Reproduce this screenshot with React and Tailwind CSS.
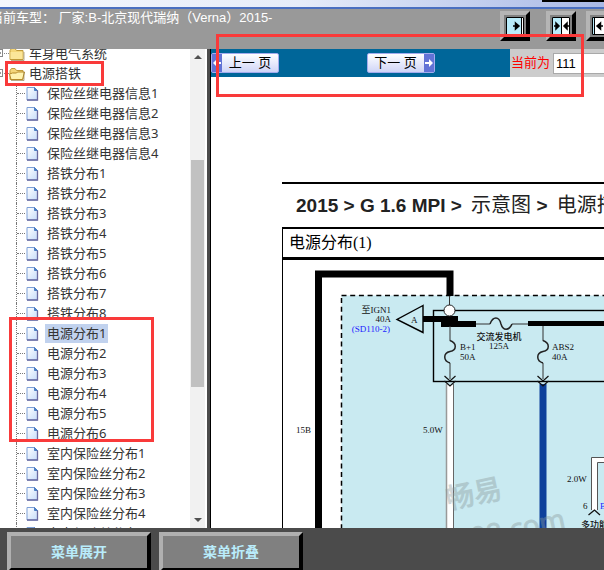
import React, { useState } from 'react';

const folders = [
  { id: 'body', name: '车身电气系统', open: false },
  { id: 'ground', name: '电源搭铁', open: true },
];

const pages = [
  '保险丝继电器信息1',
  '保险丝继电器信息2',
  '保险丝继电器信息3',
  '保险丝继电器信息4',
  '搭铁分布1',
  '搭铁分布2',
  '搭铁分布3',
  '搭铁分布4',
  '搭铁分布5',
  '搭铁分布6',
  '搭铁分布7',
  '搭铁分布8',
  '电源分布1',
  '电源分布2',
  '电源分布3',
  '电源分布4',
  '电源分布5',
  '电源分布6',
  '室内保险丝分布1',
  '室内保险丝分布2',
  '室内保险丝分布3',
  '室内保险丝分布4',
  '室内保险丝分布5',
];

const FolderIcon = ({ open }) => (
  <svg width="16" height="16" viewBox="0 -1 16 16" className="shrink-0">
    <path d="M1 4.5 2.5 2.5H6l1.5 2H14V13.5H1z" fill="#f5d77a" stroke="#c09a3a" />
    {open ? (
      <path d="M2 13.5 0.5 8 3.500 7h4l1-1h7l-2 7.5z" fill="#fff3b0" stroke="#b58a2a" />
    ) : (
      <path d="M1.500 6h12v7h-12z" fill="#fbe69a" />
    )}
    <path d="M2 14.500h13V6" fill="none" stroke="#8a7440" strokeOpacity="0.6" />
  </svg>
);

const PageIcon = () => (
  <svg width="13" height="16" viewBox="0 -1 13 16" className="shrink-0">
    <defs>
      <linearGradient id="sheet" x1="0" y1="0" x2="1" y2="1">
        <stop offset="0" stopColor="#ffffff" />
        <stop offset="1" stopColor="#c5dcfa" />
      </linearGradient>
    </defs>
    <path d="M1 1.500h7.500L11.500 4.500V14H1z" fill="url(#sheet)" stroke="#7d9fd6" />
    <path d="M8.500 1.500v3h3z" fill="#4c7fc4" stroke="#4c7fc4" />
    <path d="M1 14H11.500V4.500" fill="none" stroke="#6a6aa0" strokeWidth="1.300" />
  </svg>
);

const Expander = ({ open }) => (
  <svg width="9" height="20" viewBox="0 0 9 20" className="shrink-0">
    <rect x="-4.5" y="6.5" width="7" height="7" fill="#fff" stroke="#888" />
    <path d={open ? 'M-3 10h4' : 'M-3 10h4M-1 8v4'} stroke="#333" />
    <path d="M4 10.5h5" stroke="#888" strokeDasharray="1 1" />
  </svg>
);

const Tree = ({ selected, onSelect }) => (
  <nav className="min-w-0 flex-1 overflow-hidden text-[13px] leading-5 text-[#333]">
    <ul className="-mt-1.5">
      {folders.map((folder) => (
        <li key={folder.id} className="flex h-5 items-center">
          <Expander open={folder.open} />
          <FolderIcon open={folder.open} />
          <button type="button" className="ml-1 whitespace-nowrap">{folder.name}</button>
        </li>
      ))}
      {pages.map((page) => (
        <li key={page} className="flex h-5 items-center pl-4">
          <span className="h-5 border-l border-dotted border-[#777]" />
          <span className="mr-px w-2 border-t border-dotted border-[#777]" />
          <PageIcon />
          <button
            type="button"
            onClick={() => onSelect(page)}
            className={
              page === selected
                ? 'ml-1.5 bg-[#c1d2ee] px-0.5 leading-[19px] whitespace-nowrap'
                : 'ml-1.5 px-0.5 leading-[19px] whitespace-nowrap'
            }
          >
            {page}
          </button>
        </li>
      ))}
    </ul>
  </nav>
);

const ScrollTrack = () => (
  <div className="flex w-[15px] shrink-0 flex-col items-center bg-[#f1f1f1] py-1.5">
    <span className="border-x-4 border-b-4 border-x-transparent border-b-[#505050]" />
    <span className="h-[101px]" />
    <span className="h-[227px] w-[13px] bg-[#c1c1c1]" />
    <span className="mt-auto border-x-4 border-t-4 border-x-transparent border-t-[#505050]" />
  </div>
);

const layoutIcons = [
  { label: '展开左栏', fill: 'M0 0h15v18H0z', line: 'M15.5 0v18', arrows: 'M7 9h3M9.5 6l3.500 3-3.500 3z' },
  { label: '左右对分', fill: 'M0 0h9v18H0z', line: 'M9.5 0v18', arrows: 'M2 9h2M4 6l3 3-3 3zM17 9h-2M15 6l-3 3 3 3z' },
  { label: '展开右栏', fill: 'M0 0h2v18H0z', line: 'M2.5 0v18', arrows: 'M11 9H8.500M8.500 6L5 9l3.500 3z' },
];

const Header = () => (
  <header>
    <div className="flex h-[7px] justify-end bg-linear-to-r from-[#f4f7fd] via-[#e6ecf9] to-[#a9b9e6]">
      <span className="h-0.5 w-[62px] bg-black" />
    </div>
    <div className="h-0.5 bg-[#4a6fc0]" />
    <div className="flex h-10 justify-between overflow-hidden bg-[#999] text-[13px] text-white">
      <p className="-ml-2.5 shrink-0 pt-px leading-4 whitespace-pre">当前车型： 厂家:B-北京现代瑞纳（Verna）2015-</p>
      <div className="-mr-3 flex shrink-0 gap-2.5 pt-0.5">
        {layoutIcons.map((icon) => (
          <button
            key={icon.label}
            type="button"
            aria-label={icon.label}
            className="size-[30px] border-4 border-t-[#b5b5b5] border-r-black border-b-black border-l-[#b5b5b5] bg-[#808080] first:mr-1.5"
          >
            <svg width="18" height="18" viewBox="0 0 18 18" className="mx-auto">
              <path d="M0 0h18v18H0z" fill="#fff" />
              <path d={icon.fill} fill="#b9ecfb" />
              <path d={icon.line} stroke="#000" />
              <path d={icon.arrows} fill="#000" stroke="#000" strokeWidth="1.5" />
              <path d="M.5.5h17v17H.5z" fill="none" stroke="#000" />
            </svg>
          </button>
        ))}
      </div>
    </div>
  </header>
);

const PagerArrow = ({ back }) => (
  <span className="flex w-2.5 items-center justify-center self-stretch bg-[#6273d6]">
    <svg width="8" height="8" viewBox="0 0 8 8">
      <path d={back ? 'M8 3H4V0L0 4l4 4V5h4z' : 'M0 3h4V0l4 4-4 4V5H0z'} fill="#fff" />
    </svg>
  </span>
);

const Pager = () => {
  const [page, setPage] = useState('111');

  return (
    <div className="flex h-7 overflow-hidden bg-[#ccc] text-[13px]">
      <div className="grid min-w-0 flex-1 grid-cols-2 items-center bg-[#069] text-black">
        <button type="button" className="flex h-5 w-[68px] items-center rounded-xs border border-[#a3acee] bg-linear-to-b from-white to-[#d0d5f7]">
          <PagerArrow back />
          <span className="flex-1 leading-4">上一 页</span>
        </button>
        <button type="button" className="ml-1.5 flex h-5 w-[68px] items-center rounded-xs border border-[#a3acee] bg-linear-to-b from-white to-[#d0d5f7]">
          <span className="flex-1 leading-4">下一 页</span>
          <PagerArrow />
        </button>
      </div>
      <div className="flex w-[94px] shrink-0 items-center">
        <label htmlFor="page" className="w-[43px] shrink-0 pl-px text-[#f00]">当前为</label>
        <input
          id="page"
          value={page}
          onChange={(e) => setPage(e.target.value)}
          className="h-[21px] w-20 shrink-0 border border-[#a9a9a9] bg-white px-0.5 text-black"
        />
      </div>
    </div>
  );
};

// Power distribution sheet 1, origin at the lower edge of the title row
const Circuit = () => (
  <svg width="640" height="400" viewBox="283 259 640 400" className="block max-w-none font-['Liberation_Serif','Noto_Sans_CJK_SC',serif] text-[9px]">
    <rect x="341.5" y="294.5" width="600" height="500" fill="#c9eaf1" stroke="#000" strokeWidth="1.5" strokeDasharray="5 3.7" />
    <path d="M318.5 700V273H450V295" fill="none" stroke="#000" strokeWidth="7" />
    <rect x="433.5" y="309.5" width="500" height="71" fill="none" stroke="#000" strokeWidth="1.4" />

    <path d="M423 304.5 397 318.5 423 331.5z" fill="none" stroke="#000" strokeWidth="1.4" />
    <path d="M423 318H458" stroke="#000" strokeWidth="6" />
    <path d="M441 323H476" stroke="#000" strokeWidth="6" />
    <path d="M528 322.5H700" stroke="#000" strokeWidth="5" />
    <path d="M449.5 295V309M476 323H490M512 323H528M450 325V340M450 362V378M543 325V340M543 362V378" fill="none" stroke="#333" />
    <path d="M490 323C493 315 499 315 501 323C503 330 509 330 512 323" fill="none" stroke="#222" strokeWidth="1.5" />
    <path d="M450 339.5C457 342 457 349 450 350.5C443 352 443 360 450 362" fill="none" stroke="#222" strokeWidth="1.5" />
    <path d="M543 339.5C550 342 550 349 543 350.5C536 352 536 360 543 362" fill="none" stroke="#222" strokeWidth="1.5" />
    <circle cx="449.5" cy="309.5" r="5.5" fill="#fff" stroke="#222" />

    <path d="M447 384H453V700H447z" fill="#fff" />
    <path d="M446.5 383V700" stroke="#999" strokeWidth="1.5" />
    <path d="M453.5 383V700" stroke="#666" />
    <path d="M543 383V700" stroke="#0d409b" strokeWidth="7" />
    <path d="M444.5 375 450 380 455.5 375M444.5 380 450 385 455.5 380" fill="none" stroke="#111" strokeWidth="1.2" />
    <path d="M537.5 375 543 380 548.5 375M537.5 380 543 385 548.5 380" fill="none" stroke="#111" strokeWidth="1.2" />

    <path d="M591.5 509V456.5H700V461.5H597V509z" fill="#fff" />
    <path d="M591.5 509V456.5H700M597.5 509V461.5H700" fill="none" stroke="#555" />
    <path d="M588.5 514 594.5 509 600 514" fill="none" stroke="#111" strokeWidth="1.3" />

    <g fill="#111">
      <text x="391" y="312" textAnchor="end">至IGN1</text>
      <text x="391" y="321" textAnchor="end">40A</text>
      <text x="390" y="331" textAnchor="end" fill="#22f">(SD110-2)</text>
      <text x="411" y="322">A</text>
      <text x="460" y="349">B+1</text>
      <text x="460" y="359">50A</text>
      <text x="552" y="349">ABS2</text>
      <text x="552" y="359">40A</text>
      <text x="499" y="339" textAnchor="middle" className="font-medium">交流发电机</text>
      <text x="499" y="348" textAnchor="middle">125A</text>
      <text x="296" y="432">15B</text>
      <text x="423" y="432">5.0W</text>
      <text x="567" y="481">2.0W</text>
      <text x="583" y="508">6</text>
      <text x="600" y="508" fill="#22f">E31</text>
      <text x="581" y="527" className="font-medium">多功能</text>
    </g>

    <g
      fill="#8a9a9c"
      stroke="#8a9a9c"
      opacity="0.4"
      transform="rotate(-12 450 510)"
      className="font-['Open_Sans','Noto_Sans_CJK_SC',sans-serif] text-[28px]"
    >
      <text x="449" y="508">畅易</text>
      <text x="465" y="551">08.com</text>
    </g>
  </svg>
);

const Sheet = () => (
  <main className="min-h-0 flex-1 overflow-hidden bg-white pt-[105px] pl-[71px]">
    <h1 className="border-t-2 border-black pt-2 pb-2 pl-3.5 font-['Liberation_Sans','Noto_Sans_CJK_SC',sans-serif] text-[19px] leading-[26px] font-bold whitespace-nowrap text-[#222]">
      2015 &gt; G 1.6 MPI &gt; <span className="ml-1 text-xl leading-[26px] font-normal">示意图</span> &gt;{' '}
      <span className="ml-1 text-xl leading-[26px] font-normal">电源搭铁</span>
    </h1>
    <section className="border-t-2 border-l border-black">
      <h2 className="border-b-3 border-black pl-1.5 font-['Liberation_Serif','Noto_Sans_CJK_SC',serif] text-base leading-7">
        电源分布(1)
      </h2>
      <Circuit />
    </section>
  </main>
);

const MenuButton = ({ children }) => (
  <button
    type="button"
    className="h-10 w-36 border-4 border-t-[#b0b0b0] border-r-black border-b-black border-l-[#b0b0b0] bg-[#808080] text-sm font-bold text-[#b9ecfb]"
  >
    {children}
  </button>
);

const App = () => {
  const [selected, setSelected] = useState('电源分布1');

  return (
    <div className="relative flex h-screen flex-col overflow-hidden bg-white font-['Liberation_Sans','Noto_Sans_CJK_SC',sans-serif]">
      <Header />
      <div className="flex min-h-0 flex-1">
        <aside className="flex w-[211px] shrink-0 overflow-hidden border-r border-black font-['Noto_Sans','Noto_Sans_CJK_SC',sans-serif]">
          <Tree selected={selected} onSelect={setSelected} />
          <ScrollTrack />
          <span className="ml-0.5 w-[3px] shrink-0 bg-[#4b4b4b]" />
        </aside>
        <div className="flex min-w-0 flex-1 flex-col">
          <Pager />
          <Sheet />
        </div>
      </div>
      <footer className="flex h-[42px] shrink-0 gap-2 overflow-hidden bg-[#4b4b4b] pt-1 pl-[7px]">
        <MenuButton>菜单展开</MenuButton>
        <MenuButton>菜单折叠</MenuButton>
      </footer>

      {/* red marker frames over the page */}
      <div className="pointer-events-none absolute top-[34px] left-[216px] h-[63px] w-[368px] border-3 border-[#f93a3a]" />
      <div className="pointer-events-none absolute top-[61px] left-[5px] h-[25px] w-[99px] border-3 border-[#f93a3a]" />
      <div className="pointer-events-none absolute top-[317px] left-[9px] h-[125px] w-[145px] border-3 border-[#f93a3a]" />
    </div>
  );
};

export default App;
